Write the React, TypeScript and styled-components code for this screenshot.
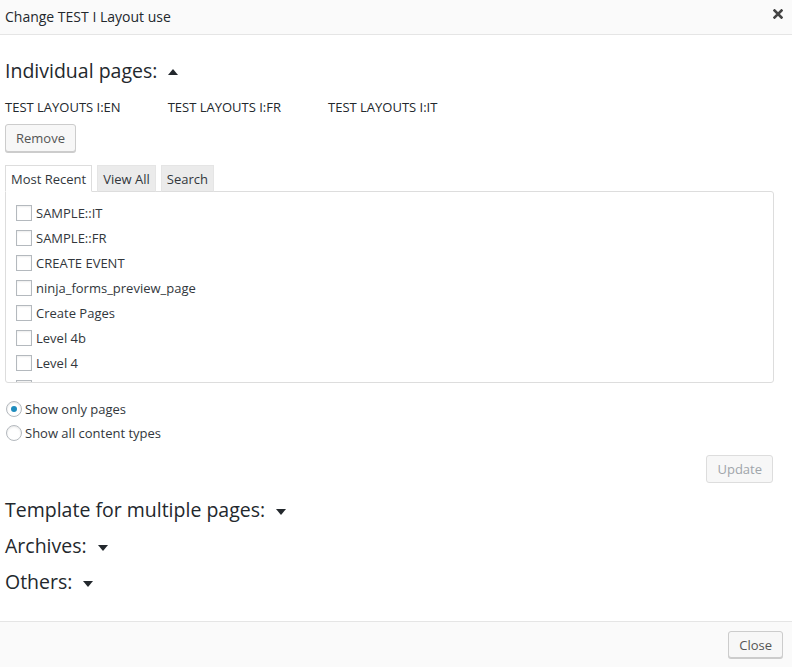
import { FC } from "react";
import styled, { createGlobalStyle } from "styled-components";

const GlobalStyle = createGlobalStyle`
  html, body {
    margin: 0;
    padding: 0;
    background: #fff;
  }
  body {
    font-family: "Open Sans", "Noto Sans", sans-serif;
    color: #32373c;
    font-size: 13px;
  }
`;

const Dialog = styled.div`
  display: flex;
  flex-direction: column;
  height: 100vh;
  width: 100%;
`;

const Header = styled.div`
  height: 34px;
  flex-shrink: 0;
  display: flex;
  align-items: center;
  justify-content: space-between;
  padding: 0 9px 0 5px;
  background: #fafafa;
  border-bottom: 1px solid #e5e5e5;
`;

const Title = styled.div`
  font-size: 14px;
  color: #23282d;
  margin-top: -2px;
`;

const CloseIcon = styled.button`
  border: 0;
  background: none;
  padding: 0;
  width: 10px;
  height: 10px;
  display: flex;
  margin-top: -6px;
  cursor: pointer;
`;

const Body = styled.div`
  flex: 1;
  padding: 0 18px 0 5px;
  overflow: hidden;
`;

const SectionTitle = styled.h2<{ $first?: boolean }>`
  margin: ${(p) => (p.$first ? "22px 0 0" : "0 0 8px")};
  font-size: 19.5px;
  line-height: 28px;
  font-weight: 400;
  color: #23282d;
  display: flex;
  align-items: center;
  gap: 11px;
`;

const Caret = styled.span<{ $up?: boolean }>`
  width: 0;
  height: 0;
  border-left: 5px solid transparent;
  border-right: 5px solid transparent;
  ${(p) =>
    p.$up
      ? "border-bottom: 6px solid #23282d; margin-top: 1px;"
      : "border-top: 6px solid #23282d; margin-top: 3px;"}
`;

const AssignedRow = styled.div`
  display: flex;
  gap: 47px;
  margin-top: 13px;
  font-size: 13px;
  line-height: 18px;
  color: #23282d;
`;

const Button = styled.button<{ $disabled?: boolean }>`
  font-family: inherit;
  font-size: 13px;
  height: 28px;
  padding: 0 10px;
  border: 1px solid ${(p) => (p.$disabled ? "#ddd" : "#ccc")};
  border-radius: 3px;
  background: #f7f7f7;
  color: ${(p) => (p.$disabled ? "#a0a5aa" : "#555")};
  box-shadow: ${(p) => (p.$disabled ? "none" : "0 1px 0 #ccc")};
  cursor: pointer;
`;

const RemoveWrap = styled.div`
  margin-top: 8px;
`;

const Tabs = styled.div`
  display: flex;
  gap: 5px;
  margin-top: 13px;
  position: relative;
  z-index: 1;
  margin-bottom: -1px;
`;

const Tab = styled.div<{ $active?: boolean }>`
  height: 27px;
  box-sizing: border-box;
  padding: 0 5px;
  display: flex;
  align-items: center;
  font-size: 13px;
  border: 1px solid ${(p) => (p.$active ? "#ddd" : "#e5e5e5")};
  border-bottom-color: ${(p) => (p.$active ? "#fff" : "#ddd")};
  background: ${(p) => (p.$active ? "#fff" : "#ebebeb")};
  color: #32373c;
`;

const ListBox = styled.div`
  height: 192px;
  box-sizing: border-box;
  border: 1px solid #ddd;
  border-radius: 0 3px 3px 3px;
  padding: 8px 10px 0;
  overflow: hidden;
  background: #fff;
`;

const Item = styled.label`
  display: flex;
  align-items: center;
  height: 25px;
  gap: 4px;
  font-size: 13px;
  color: #32373c;
`;

const CheckBox = styled.span`
  width: 16px;
  height: 16px;
  box-sizing: border-box;
  border: 1px solid #b4b9be;
  background: #fff;
  box-shadow: inset 0 1px 2px rgba(0, 0, 0, 0.07);
  flex-shrink: 0;
`;

const RadioGroup = styled.div`
  margin-top: 14px;
`;

const RadioRow = styled.label`
  display: flex;
  align-items: center;
  height: 24px;
  gap: 3px;
  font-size: 13px;
  color: #32373c;
`;

const Radio = styled.span<{ $checked?: boolean }>`
  width: 16px;
  height: 16px;
  box-sizing: border-box;
  margin-left: 1px;
  border: 1px solid #b4b9be;
  border-radius: 50%;
  background: #fff;
  box-shadow: inset 0 1px 2px rgba(0, 0, 0, 0.1);
  display: flex;
  align-items: center;
  justify-content: center;
  &::after {
    content: "";
    display: ${(p) => (p.$checked ? "block" : "none")};
    width: 6px;
    height: 6px;
    border-radius: 50%;
    background: #1e8cbe;
  }
`;

const UpdateRow = styled.div`
  display: flex;
  justify-content: flex-end;
  margin: 10px 1px 13px 0;
`;

const Footer = styled.div`
  height: 46px;
  flex-shrink: 0;
  box-sizing: border-box;
  border-top: 1px solid #e5e5e5;
  background: #fafafa;
  display: flex;
  align-items: center;
  justify-content: flex-end;
  padding: 0 9px 0 0;
`;

const FooterButton = styled(Button)`
  height: 27px;
  padding: 0 10px;
  color: #555;
`;

const layouts = ["TEST LAYOUTS I:EN", "TEST LAYOUTS I:FR", "TEST LAYOUTS I:IT"];

// the last row is scrolled out of view, only its checkbox top shows
const pages = [
  "SAMPLE::IT",
  "SAMPLE::FR",
  "CREATE EVENT",
  "ninja_forms_preview_page",
  "Create Pages",
  "Level 4b",
  "Level 4",
  "",
];

const CloseX: FC = () => (
  <svg width="10" height="10" viewBox="0 0 10 10">
    <path d="M1.5 1.5 L8.5 8.5 M8.5 1.5 L1.5 8.5" stroke="#444" strokeWidth="2.6" strokeLinecap="square" />
  </svg>
);

export default function App() {
  return (
    <>
      <GlobalStyle />
      <Dialog>
        <Header>
          <Title>Change TEST I Layout use</Title>
          <CloseIcon aria-label="Close">
            <CloseX />
          </CloseIcon>
        </Header>
        <Body>
          <SectionTitle $first>
            Individual pages: <Caret $up />
          </SectionTitle>
          <AssignedRow>
            {layouts.map((l) => (
              <span key={l}>{l}</span>
            ))}
          </AssignedRow>
          <RemoveWrap>
            <Button>Remove</Button>
          </RemoveWrap>
          <Tabs>
            <Tab $active>Most Recent</Tab>
            <Tab>View All</Tab>
            <Tab>Search</Tab>
          </Tabs>
          <ListBox>
            {pages.map((p, i) => (
              <Item key={i}>
                <CheckBox />
                {p}
              </Item>
            ))}
          </ListBox>
          <RadioGroup>
            <RadioRow>
              <Radio $checked />
              Show only pages
            </RadioRow>
            <RadioRow>
              <Radio />
              Show all content types
            </RadioRow>
          </RadioGroup>
          <UpdateRow>
            <Button $disabled>Update</Button>
          </UpdateRow>
          <SectionTitle>
            Template for multiple pages: <Caret />
          </SectionTitle>
          <SectionTitle>
            Archives: <Caret />
          </SectionTitle>
          <SectionTitle>
            Others: <Caret />
          </SectionTitle>
        </Body>
        <Footer>
          <FooterButton>Close</FooterButton>
        </Footer>
      </Dialog>
    </>
  );
}
